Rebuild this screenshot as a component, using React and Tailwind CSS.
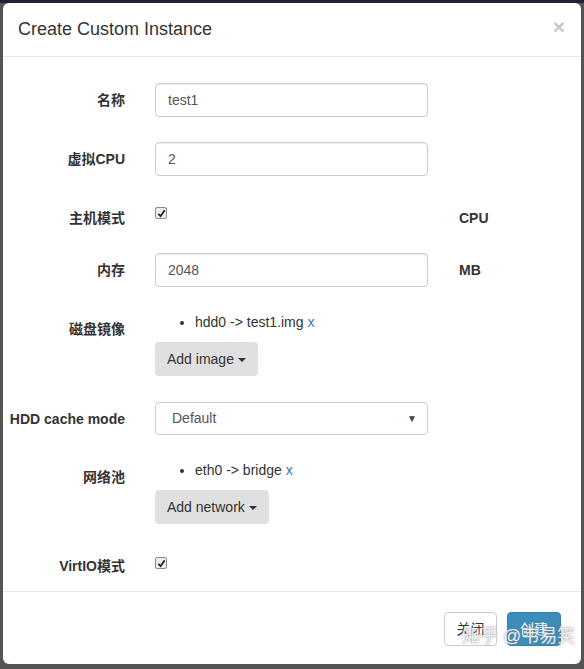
import React from "react";

const font = "font-['Liberation_Sans','Noto_Sans_CJK_SC',sans-serif]";

function Check() {
  return (
    <div className="w-[12px] h-[12px] border border-[#8c8c8c] bg-[#ececec] rounded-[2px] flex items-center justify-center">
      <svg width="9" height="9" viewBox="0 0 10 10">
        <path d="M1.5 5.5 L4 8 L8.5 1.5" fill="none" stroke="#222" strokeWidth="2" />
      </svg>
    </div>
  );
}

function Caret() {
  return <span className="inline-block ml-[4px] align-middle border-t-[4px] border-t-[#333] border-x-[4px] border-x-transparent" />;
}

function Label({ children }) {
  return (
    <div className="w-[122px] shrink-0 text-right font-bold text-[14px] leading-[20px] pt-[7px] text-[#333]">
      {children}
    </div>
  );
}

function Input({ value }) {
  return (
    <div className="w-[273px] h-[34px] border border-[#ccc] rounded-[4px] px-[12px] flex items-center text-[14px] text-[#555] shadow-[inset_0_1px_1px_rgba(0,0,0,0.075)]">
      {value}
    </div>
  );
}

function Unit({ children }) {
  return <div className="ml-[31px] font-bold text-[14px] leading-[20px] pt-[7px] text-[#333]">{children}</div>;
}

export default function App() {
  return (
    <div className={`${font} relative h-[669px] bg-[linear-gradient(#281e31_0,#281e31_3px,#555_3px)] pt-[3px] px-[3px] text-[#333]`}>
      <div className="bg-white rounded-[6px] w-[578px] h-[661px] flex flex-col">
        {/* header */}
        <div className="h-[54px] border-b border-[#e5e5e5] flex items-center justify-between pl-[15px] pr-[16px]">
          <h4 className="text-[18px] leading-[20px] text-[#333] pb-[2px]">Create Custom Instance</h4>
          <span className="text-[21px] font-bold text-[#c8c8c8] leading-none -mt-[6px]">×</span>
        </div>

        {/* body */}
        <div className="pt-[26px] pb-[15px] border-b border-[#e5e5e5]">
          <div className="flex">
            <Label>名称</Label>
            <div className="ml-[30px]"><Input value="test1" /></div>
          </div>

          <div className="flex mt-[25px]">
            <Label>虚拟CPU</Label>
            <div className="ml-[30px]"><Input value="2" /></div>
          </div>

          <div className="flex mt-[25px]">
            <Label>主机模式</Label>
            <div className="ml-[30px] w-[273px] pt-[6px]"><Check /></div>
            <Unit>CPU</Unit>
          </div>

          <div className="flex mt-[25px]">
            <Label>内存</Label>
            <div className="ml-[30px]"><Input value="2048" /></div>
            <Unit>MB</Unit>
          </div>

          <div className="flex mt-[25px]">
            <Label>磁盘镜像</Label>
            <div className="ml-[30px]">
              <ul className="list-disc pl-[40px] text-[14px] leading-[20px]">
                <li>hdd0 -&gt; test1.img <a className="text-[#337ab7]">x</a></li>
              </ul>
              <button className="mt-[10px] h-[34px] px-[12px] bg-[#e0e0e0] rounded-[4px] text-[14px] text-[#333]">
                Add image<Caret />
              </button>
            </div>
          </div>

          <div className="flex mt-[26px]">
            <Label>HDD cache mode</Label>
            <div className="ml-[30px] w-[273px] h-[33px] border border-[#ccc] rounded-[4px] pl-[16px] pr-[10px] flex items-center justify-between text-[14px] text-[#555]">
              <span>Default</span>
              <span className="text-[10px] text-[#444]">▼</span>
            </div>
          </div>

          <div className="flex mt-[25px]">
            <Label>网络池</Label>
            <div className="ml-[30px]">
              <ul className="list-disc pl-[40px] text-[14px] leading-[20px]">
                <li>eth0 -&gt; bridge <a className="text-[#337ab7]">x</a></li>
              </ul>
              <button className="mt-[10px] h-[34px] px-[12px] bg-[#e0e0e0] rounded-[4px] text-[14px] text-[#333]">
                Add network<Caret />
              </button>
            </div>
          </div>

          <div className="flex mt-[25px]">
            <Label>VirtIO模式</Label>
            <div className="ml-[30px] pt-[8px]"><Check /></div>
          </div>
        </div>

        {/* footer */}
        <div className="flex justify-end gap-[10px] pt-[20px] pr-[20px]">
          <button className="h-[34px] w-[53px] border border-[#ccc] rounded-[4px] bg-white text-[14px] text-[#333]">关闭</button>
          <button className="h-[34px] w-[54px] border border-[#367fa9] rounded-[4px] bg-[#3c8dbc] text-[14px] text-white">创建</button>
        </div>
      </div>

      <div className="absolute left-[462px] top-[622px] whitespace-nowrap text-[18px] leading-[28px] text-white/85 [text-shadow:0_0_2px_#777]">
        知乎 @韦易笑
      </div>
    </div>
  );
}
